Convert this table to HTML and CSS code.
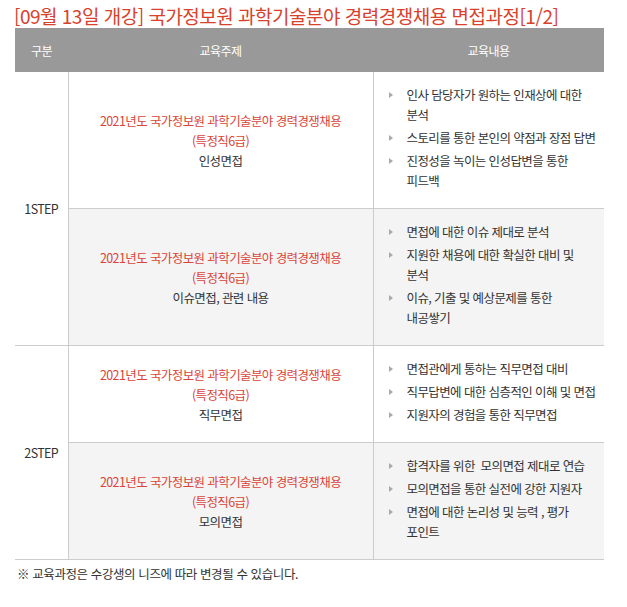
FILE: index.html
```html
<!DOCTYPE html>
<html lang="ko">
<head>
<meta charset="utf-8">
<link rel="stylesheet" href="styles.css">
</head>
<body>
<div class="page">
  <h2 class="title">[09월 13일 개강] 국가정보원 과학기술분야 경력경쟁채용 면접과정[1/2]</h2>
  <table class="course">
    <colgroup>
      <col class="c1"><col class="c2"><col class="c3">
    </colgroup>
    <thead>
      <tr><th class="h1">구분</th><th>교육주제</th><th>교육내용</th></tr>
    </thead>
    <tbody>
      <tr>
        <td class="step" rowspan="2">1STEP</td>
        <td class="topic"><span class="red">2021년도 국가정보원 과학기술분야 경력경쟁채용<br>(특정직6급)</span><br>인성면접</td>
        <td class="content"><ul>
          <li>인사 담당자가 원하는 인재상에 대한<br>분석</li>
          <li>스토리를 통한 본인의 약점과 장점 답변</li>
          <li>진정성을 녹이는 인성답변을 통한<br>피드백</li>
        </ul></td>
      </tr>
      <tr class="alt">
        <td class="topic"><span class="red">2021년도 국가정보원 과학기술분야 경력경쟁채용<br>(특정직6급)</span><br>이슈면접, 관련 내용</td>
        <td class="content"><ul>
          <li>면접에 대한 이슈 제대로 분석</li>
          <li>지원한 채용에 대한 확실한 대비 및<br>분석</li>
          <li>이슈, 기출 및 예상문제를 통한<br>내공쌓기</li>
        </ul></td>
      </tr>
      <tr>
        <td class="step" rowspan="2">2STEP</td>
        <td class="topic"><span class="red">2021년도 국가정보원 과학기술분야 경력경쟁채용<br>(특정직6급)</span><br>직무면접</td>
        <td class="content"><ul>
          <li>면접관에게 통하는 직무면접 대비</li>
          <li>직무답변에 대한 심층적인 이해 및 면접</li>
          <li>지원자의 경험을 통한 직무면접</li>
        </ul></td>
      </tr>
      <tr class="alt">
        <td class="topic"><span class="red">2021년도 국가정보원 과학기술분야 경력경쟁채용<br>(특정직6급)</span><br>모의면접</td>
        <td class="content"><ul>
          <li>합격자를 위한&nbsp; 모의면접 제대로 연습</li>
          <li>모의면접을 통한 실전에 강한 지원자</li>
          <li>면접에 대한 논리성 및 능력 , 평가<br>포인트</li>
        </ul></td>
      </tr>
    </tbody>
  </table>
  <p class="note">※ 교육과정은 수강생의 니즈에 따라 변경될 수 있습니다.</p>
</div>
</body>
</html>
```
FILE: styles.css
```css
html, body {
  margin: 0;
  padding: 0;
  background: #fff;
}
.page {
  padding: 0 0 0 15px;
  width: 589px;
  font-family: "Noto Sans CJK KR", "Noto Sans", sans-serif;
  color: #333;
}
.title {
  margin: 3px 0 0 -1px;
  height: 25px;
  font-size: 19px;
  line-height: 25px;
  font-weight: normal;
  color: #d8412c;
  letter-spacing: -0.5px;
  white-space: nowrap;
}
.course {
  width: 589px;
  border-collapse: collapse;
  table-layout: fixed;
  font-size: 12.5px;
  letter-spacing: -0.6px;
}
.c1 { width: 53px; }
.c2 { width: 305px; }
.c3 { width: 231px; }
.course th {
  background: #999;
  color: #fff;
  font-weight: normal;
  font-size: 12px;
  height: 44px;
  padding: 0;
  text-align: center;
}
.course td {
  border-bottom: 1px solid #ccc;
  padding: 0;
  vertical-align: middle;
}
.course td.step {
  text-align: center;
  color: #333;
  border-right: 1px solid #ccc;
  letter-spacing: -0.6px;
}
.course td.topic {
  text-align: center;
  line-height: 20px;
  border-right: 1px solid #ccc;
  padding-top: 2px;
}
.red { color: #d9453a; }
.course tr.alt td.topic,
.course tr.alt td.content { background: #f4f4f4; }
.content ul {
  list-style: none;
  margin: 0;
  padding: 13px 0 17px 33px;
}
.content li {
  position: relative;
  line-height: 20px;
  margin-bottom: 3px;
}
.content li:last-child { margin-bottom: 0; }
.content li::before {
  content: "";
  position: absolute;
  left: -18px;
  top: 7px;
  border-left: 4px solid #aaa;
  border-top: 3px solid transparent;
  border-bottom: 3px solid transparent;
}
.note {
  margin: 6px 0 0 2px;
  font-size: 12.5px;
  line-height: 16px;
  letter-spacing: -0.4px;
  color: #333;
}
```
